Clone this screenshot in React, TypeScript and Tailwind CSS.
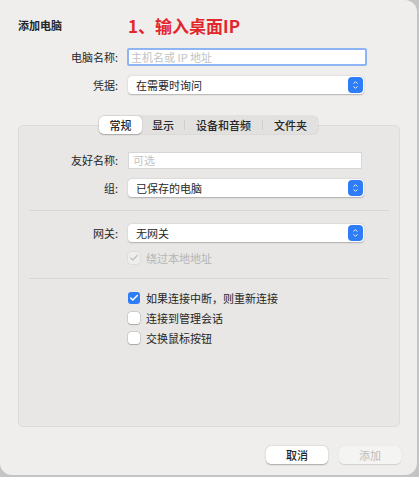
import { Check, ChevronUp, ChevronDown } from "lucide-react"

const font = { fontFamily: '"Noto Sans CJK SC", "Noto Sans", sans-serif' }

function Stepper() {
    return (
        <div className="w-[15px] h-[16px] rounded-[4px] bg-[#2f7df6] flex flex-col items-center justify-center text-white">
            <ChevronUp className="w-[9px] h-[7px] -mb-[1px]" strokeWidth={3} />
            <ChevronDown className="w-[9px] h-[7px] -mt-[1px]" strokeWidth={3} />
        </div>
    )
}

function Select({ value }: { value: string }) {
    return (
        <div className="h-[18px] w-[236px] rounded-[4px] bg-white shadow-[0_0.5px_1.5px_rgba(0,0,0,0.25)] flex items-center justify-between pl-[8px] pr-[1px]">
            <span className="text-[11px] text-[#262626] leading-none">{value}</span>
            <Stepper />
        </div>
    )
}

function Row({ label, children }: { label: string; children: React.ReactNode }) {
    return (
        <div className="flex items-center">
            <div className="w-[101px] text-right pr-[1px] text-[11px] text-[#262626] leading-none">{label}</div>
            <div className="ml-[9px]">{children}</div>
        </div>
    )
}

function Checkbox({ checked, disabled, label }: { checked?: boolean; disabled?: boolean; label: string }) {
    let box = "bg-white shadow-[0_0_0_0.5px_rgba(0,0,0,0.18),0_0.5px_1px_rgba(0,0,0,0.2)]"
    if (checked && !disabled) box = "bg-[#2f7df6]"
    if (disabled) box = "bg-[#eeeeec] shadow-[0_0_0_0.5px_rgba(0,0,0,0.08)]"
    return (
        <div className="flex items-center gap-[6px] h-[20px]">
            <div className={`w-[12px] h-[12px] rounded-[3px] flex items-center justify-center ${box}`}>
                {checked && (
                    <Check className={`w-[10px] h-[10px] ${disabled ? "text-[#c4c4c4]" : "text-white"}`} strokeWidth={3.5} />
                )}
            </div>
            <span className={`text-[11px] leading-none ${disabled ? "text-[#b4b4b4]" : "text-[#262626]"}`}>{label}</span>
        </div>
    )
}

export default function App() {
    return (
        <div className="w-[419px] h-[477px] bg-[#c4c4c4]" style={font}>
            <div className="w-[417px] h-[475px] bg-[#efeeec] rounded-tr-[12px] rounded-br-[12px] rounded-bl-[12px] flex flex-col">
                {/* Header */}
                <div className="flex items-center h-[20px] mt-[15px]">
                    <span className="ml-[18px] w-[110px] text-[11px] font-bold text-[#262626]">添加电脑</span>
                    <span className="text-[17px] font-bold text-[#e3262b] leading-none">1、输入桌面IP</span>
                </div>

                <div className="flex flex-col gap-[10px] mt-[13px] ml-[18px]">
                    <Row label="电脑名称:">
                        <div className="h-[18px] w-[240px] -ml-[1px] bg-white rounded-[2px] border-[2.5px] border-[#8db4f3] flex items-center pl-[2px]">
                            <span className="text-[11px] text-[#c2c2c2] leading-none">主机名或 IP 地址</span>
                        </div>
                    </Row>
                    <Row label="凭据:">
                        <Select value="在需要时询问" />
                    </Row>
                </div>

                {/* Tabs */}
                <div className="flex justify-center mt-[22px] relative z-10 -mb-[9px] pr-[1px]">
                    <div className="h-[18px] ml-[1px] rounded-[5px] bg-[#e2e1df] shadow-[0_0_0_0.5px_rgba(0,0,0,0.1)] flex items-center text-[11px] text-[#262626] font-medium">
                        <div className="h-[18px] w-[43px] rounded-[5px] bg-white shadow-[0_0.5px_1.5px_rgba(0,0,0,0.25)] flex items-center justify-center">常规</div>
                        <div className="w-[42px] text-center">显示</div>
                        <div className="w-px h-[10px] bg-[#cfcecc]" />
                        <div className="w-[77px] text-center">设备和音频</div>
                        <div className="w-px h-[10px] bg-[#cfcecc]" />
                        <div className="w-[55px] text-center">文件夹</div>
                    </div>
                </div>

                {/* Group box */}
                <div className="ml-[18px] w-[382px] h-[302px] rounded-[5px] bg-[#e8e7e5] border border-[#dddcda] pt-[26px]">
                    <div className="flex flex-col gap-[10px] -ml-[1px]">
                        <Row label="友好名称:">
                            <div className="h-[17px] w-[234px] bg-white border border-[#d6d6d6] flex items-center pl-[4px]">
                                <span className="text-[11px] text-[#c4c4c4] leading-none">可选</span>
                            </div>
                        </Row>
                        <Row label="组:">
                            <Select value="已保存的电脑" />
                        </Row>
                    </div>

                    <div className="mx-[10px] h-px bg-[#d8d7d5] mt-[13px]" />

                    <div className="mt-[13px] -ml-[1px]">
                        <Row label="网关:">
                            <Select value="无网关" />
                        </Row>
                    </div>
                    <div className="ml-[109px] mt-[6px]">
                        <Checkbox checked disabled label="绕过本地地址" />
                    </div>

                    <div className="mx-[10px] h-px bg-[#d8d7d5] mt-[10px]" />

                    <div className="ml-[109px] mt-[9px] flex flex-col">
                        <Checkbox checked label="如果连接中断，则重新连接" />
                        <Checkbox label="连接到管理会话" />
                        <Checkbox label="交换鼠标按钮" />
                    </div>
                </div>

                {/* Buttons */}
                <div className="flex justify-end gap-[11px] mr-[16px] mt-[19px]">
                    <div className="w-[62px] h-[18px] rounded-[5px] bg-white shadow-[0_0.5px_1.5px_rgba(0,0,0,0.3)] flex items-center justify-center text-[11px] text-[#262626] font-medium">取消</div>
                    <div className="w-[62px] h-[18px] rounded-[5px] bg-[#f4f4f3] shadow-[0_0.5px_1px_rgba(0,0,0,0.12)] flex items-center justify-center text-[11px] text-[#bdbdbd]">添加</div>
                </div>
            </div>
        </div>
    )
}
